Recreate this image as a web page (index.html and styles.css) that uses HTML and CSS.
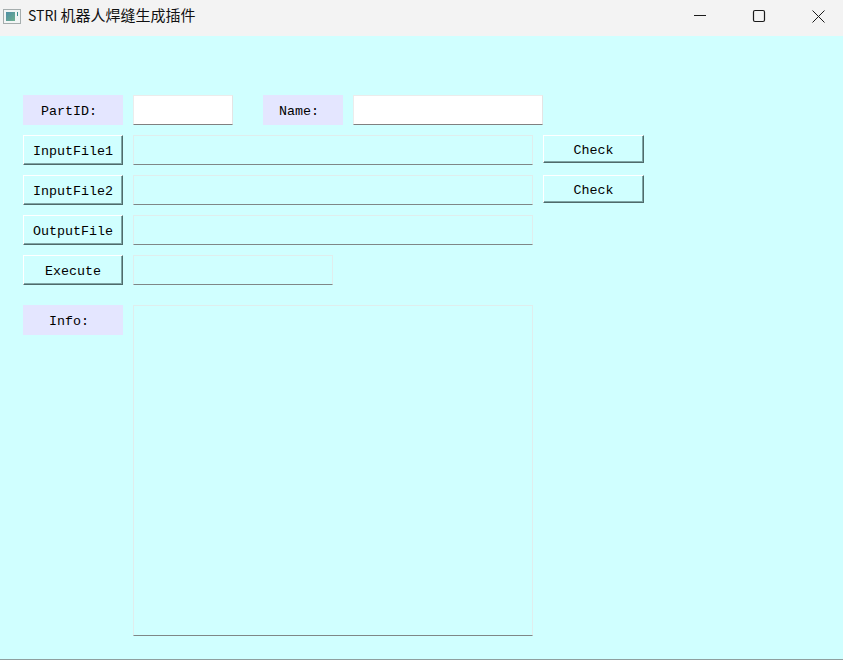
FILE: index.html
```html
<!DOCTYPE html>
<html lang="zh">
<head>
<meta charset="utf-8">
<title>STRI 机器人焊缝生成插件</title>
<link rel="stylesheet" href="styles.css">
</head>
<body>
<div class="window">
  <header class="titlebar">
    <svg class="app-icon" width="18" height="15" viewBox="0 0 18 15">
      <defs>
        <linearGradient id="icon-fill" x1="0" y1="0" x2="1" y2="1">
          <stop offset="0" stop-color="#4f8fa5"/>
          <stop offset="1" stop-color="#6fb08f"/>
        </linearGradient>
      </defs>
      <rect x="0.5" y="0.5" width="17" height="14" fill="#f2f5f5" stroke="#a5adad"/>
      <rect x="3" y="3" width="9" height="9" fill="url(#icon-fill)"/>
      <rect x="14" y="3" width="1" height="4" fill="#3f8f8f"/>
    </svg>
    <span class="title"><span class="title-latin">STRI </span>机器人焊缝生成插件</span>
    <div class="controls">
      <svg class="control" width="46" height="32" viewBox="0 0 46 32"><path d="M17 15.5H29" stroke="#1a1a1a" fill="none"/></svg>
      <svg class="control" width="46" height="32" viewBox="0 0 46 32"><rect x="17.5" y="10.5" width="11" height="11" rx="1.5" stroke="#1a1a1a" stroke-width="1.2" fill="none"/></svg>
      <svg class="control" width="46" height="32" viewBox="0 0 46 32"><path d="M17.5 10.5L29.5 22.5M29.5 10.5L17.5 22.5" stroke="#1a1a1a" fill="none"/></svg>
    </div>
  </header>
  <main class="content">
    <div class="row">
      <div class="label">PartID: </div>
      <input class="field white w100" type="text">
      <div class="label short">Name: </div>
      <input class="field white w190" type="text">
    </div>
    <div class="row">
      <button class="btn">InputFile1</button>
      <input class="field w400" type="text">
      <button class="btn check">Check</button>
    </div>
    <div class="row">
      <button class="btn">InputFile2</button>
      <input class="field w400" type="text">
      <button class="btn check">Check</button>
    </div>
    <div class="row">
      <button class="btn">OutputFile</button>
      <input class="field w400" type="text">
    </div>
    <div class="row">
      <button class="btn">Execute</button>
      <input class="field w200" type="text">
    </div>
    <div class="row info">
      <div class="label">Info: </div>
      <textarea class="field area"></textarea>
    </div>
  </main>
</div>
</body>
</html>
```
FILE: styles.css
```css
* { box-sizing: border-box; }
html, body { margin: 0; height: 100%; }
body { overflow: hidden; }
.window {
  width: 843px;
  height: 660px;
  display: flex;
  flex-direction: column;
  background: #d0ffff;
  border-bottom: 1px solid #8f9f9f;
}
.titlebar {
  height: 36px;
  flex: none;
  background: #f3f3f3;
  display: flex;
  align-items: center;
  padding: 0 0 4px 3px;
}
.app-icon { margin-right: 7px; flex: none; }
.title {
  font: 15px "Noto Sans CJK SC", "Noto Sans", sans-serif;
  line-height: 20px;
  color: #111;
  margin-bottom: 2px;
}
.title-latin { font-size: 14px; }
.controls { margin-left: auto; display: flex; padding-right: 2px; }
.control { display: block; }
.control + .control { margin-left: 13px; }
.content {
  flex: 1;
  padding: 59px 0 0 23px;
  display: flex;
  flex-direction: column;
  gap: 10px;
}
.row { display: flex; align-items: flex-start; height: 30px; }
.label, .btn {
  font: 13.33px "Liberation Mono", monospace;
  color: #000;
  width: 100px;
  height: 30px;
  flex: none;
  text-align: center;
  white-space: pre;
}
.label {
  background: #e4e6ff;
  line-height: 33px;
  margin-right: 10px;
}
.label.short { width: 80px; margin-left: 30px; }
.btn {
  background: #d0ffff;
  padding: 2px 0 0;
  border: 1px solid;
  border-color: #fff #4f6b6b #4f6b6b #fff;
  box-shadow: inset 0 -1px 0 #7fa5a5, inset -1px 0 0 #7fa5a5;
  margin-right: 10px;
}
.btn.check { width: 101px; height: 28px; margin: 0 0 0 10px; padding-top: 3px; }
.field {
  display: block;
  height: 30px;
  padding: 0;
  margin: 0;
  background: transparent;
  border: 1px solid #e0eded;
  border-bottom: 1px solid #7f8787;
  border-radius: 0;
  outline: none;
  flex: none;
  resize: none;
  overflow: hidden;
}
.white { background: #fff; border-color: #ececec #e4e4e4 #808080 #ececec; }
.w100 { width: 100px; }
.w190 { width: 190px; }
.w200 { width: 200px; }
.w400 { width: 400px; }
.info { margin-top: 10px; height: 331px; }
.area { width: 400px; height: 331px; }
```
